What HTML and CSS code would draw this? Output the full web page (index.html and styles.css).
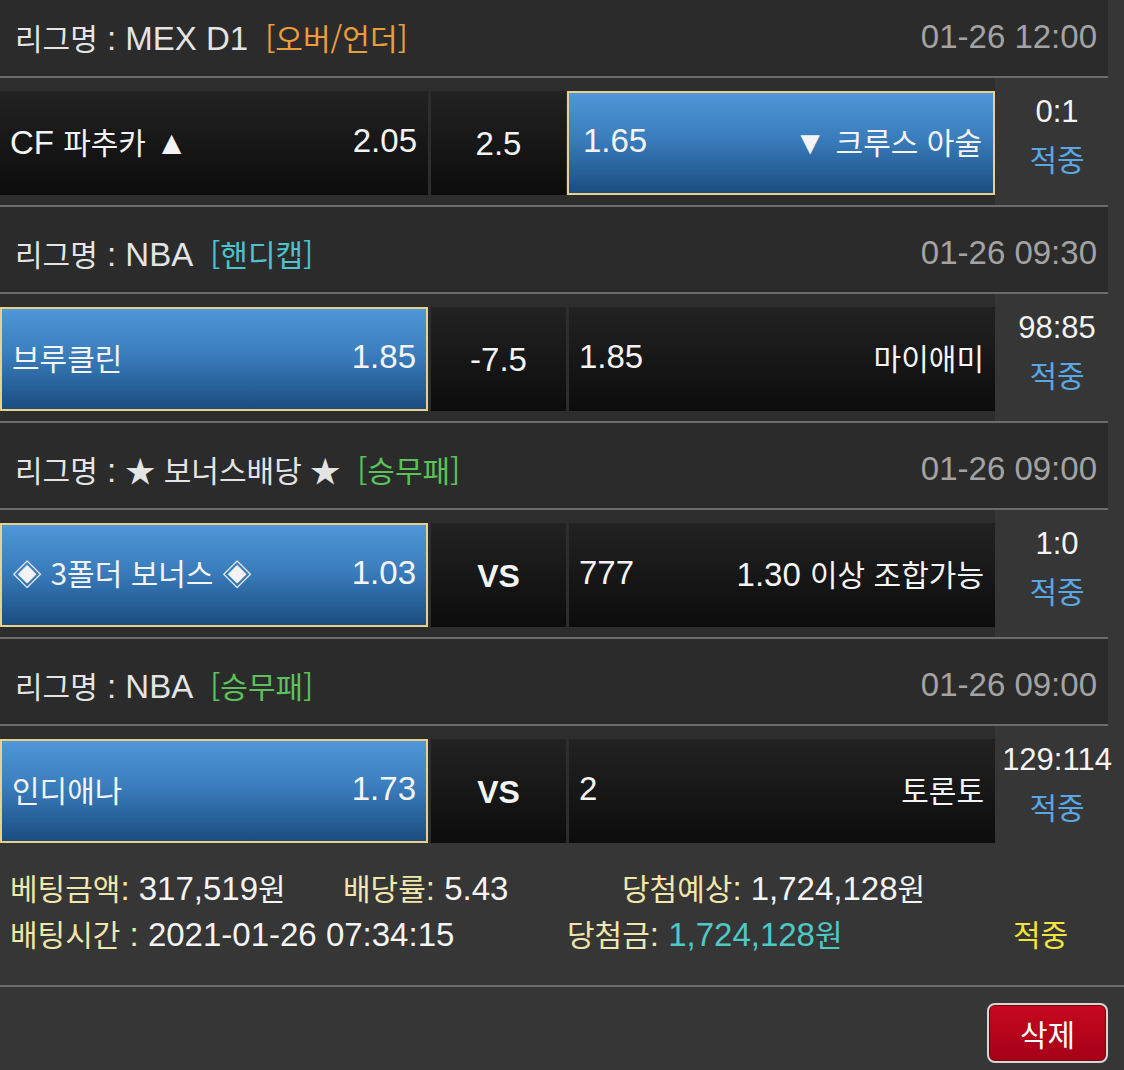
FILE: index.html
```html
<!DOCTYPE html>
<html lang="ko">
<head>
<meta charset="utf-8">
<title>배팅내역</title>
<link rel="stylesheet" href="styles.css">
</head>
<body>
<div class="list">
  <section class="game">
    <div class="league"><span class="lg-name"><span class="k">리그명</span> : MEX D1</span><span class="tag tag-ou k">[오버/언더]</span><span class="date">01-26 12:00</span></div>
    <div class="match">
      <div class="cells">
        <div class="cell side"><span>CF <span class="k">파추카</span> ▲</span><span>2.05</span></div>
        <div class="cell mid">2.5</div>
        <div class="cell side picked"><span>1.65</span><span>▼ <span class="k">크루스 아술</span></span></div>
      </div>
      <div class="score"><div class="sc">0:1</div><div class="res k">적중</div></div>
    </div>
  </section>
  <section class="game">
    <div class="league"><span class="lg-name"><span class="k">리그명</span> : NBA</span><span class="tag tag-hd k">[핸디캡]</span><span class="date">01-26 09:30</span></div>
    <div class="match">
      <div class="cells">
        <div class="cell side picked"><span class="k">브루클린</span><span>1.85</span></div>
        <div class="cell mid">-7.5</div>
        <div class="cell side"><span>1.85</span><span class="k">마이애미</span></div>
      </div>
      <div class="score"><div class="sc">98:85</div><div class="res k">적중</div></div>
    </div>
  </section>
  <section class="game">
    <div class="league"><span class="lg-name"><span class="k">리그명</span> : <span class="k">★ 보너스배당 ★</span></span><span class="tag tag-wdl k">[승무패]</span><span class="date">01-26 09:00</span></div>
    <div class="match">
      <div class="cells">
        <div class="cell side picked"><span class="k">◈ 3폴더 보너스 ◈</span><span>1.03</span></div>
        <div class="cell mid vs">VS</div>
        <div class="cell side"><span>777</span><span>1.30 <span class="k">이상 조합가능</span></span></div>
      </div>
      <div class="score"><div class="sc">1:0</div><div class="res k">적중</div></div>
    </div>
  </section>
  <section class="game last">
    <div class="league"><span class="lg-name"><span class="k">리그명</span> : NBA</span><span class="tag tag-wdl k">[승무패]</span><span class="date">01-26 09:00</span></div>
    <div class="match">
      <div class="cells">
        <div class="cell side picked"><span class="k">인디애나</span><span>1.73</span></div>
        <div class="cell mid vs">VS</div>
        <div class="cell side"><span>2</span><span class="k">토론토</span></div>
      </div>
      <div class="score"><div class="sc">129:114</div><div class="res k">적중</div></div>
    </div>
  </section>
</div>

<div class="summary">
  <div class="sum-row">
    <div class="it it-a"><span class="lbl"><span class="k">베팅금액</span>:</span> 317,519<span class="k">원</span></div>
    <div class="it it-b"><span class="lbl"><span class="k">배당률</span>:</span> 5.43</div>
    <div class="it"><span class="lbl"><span class="k">당첨예상</span>:</span> 1,724,128<span class="k">원</span></div>
  </div>
  <div class="sum-row">
    <div class="it it-c"><span class="lbl"><span class="k">배팅시간</span> :</span> 2021-01-26 07:34:15</div>
    <div class="it it-d"><span class="lbl"><span class="k">당첨금</span>:</span> <span class="win">1,724,128<span class="k">원</span></span></div>
    <div class="it hit k">적중</div>
  </div>
</div>

<div class="actions">
  <button class="btn-del k" type="button">삭제</button>
</div>
</body>
</html>
```

FILE: styles.css
```css
html, body {
  margin: 0;
  padding: 0;
}
body {
  background: #363636;
  color: #f2f2f2;
  font-family: "Liberation Sans", "Noto Sans CJK KR", sans-serif;
  font-size: 33px;
  width: 1124px;
  height: 1070px;
  overflow: hidden;
}
.k {
  font-family: "Noto Sans CJK KR", "Liberation Sans", sans-serif;
  font-size: 30px;
}

.list {
  width: 1108px;
  margin-top: -9px;
}

.league {
  height: 87px;
  box-sizing: border-box;
  padding: 7px 11px 0 15px;
  display: flex;
  align-items: center;
  background: #2b2b2b;
  border-bottom: 2px solid #6b6b6b;
  color: #e4e4e4;
}
.tag {
  margin-left: 17px;
}
.tag-ou { color: #e89e3c; }
.tag-hd { color: #4cc3cf; }
.tag-wdl { color: #5cc15a; }
.date {
  margin-left: auto;
  color: #a3a3a3;
}

.match {
  display: flex;
  height: 127px;
  border-bottom: 2px solid #6b6b6b;
}
.game.last .match {
  height: 117px;
  border-bottom: 0;
}
.cells {
  width: 995px;
  flex: none;
  box-sizing: border-box;
  padding: 13px 0 10px;
  display: flex;
  gap: 3px;
  background: #2d2d2d;
}
.game.last .cells {
  padding-bottom: 0;
}
.cell {
  box-sizing: border-box;
  height: 104px;
  display: flex;
  align-items: center;
  background: linear-gradient(#222222, #0c0c0c);
  color: #f4f4f4;
  white-space: nowrap;
}
.cell.side {
  justify-content: space-between;
  padding: 0 11px 4px 10px;
}
.cells .cell:first-child { width: 428px; }
.cells .cell.mid {
  width: 135px;
  justify-content: center;
  padding-top: 2px;
}
.cells .cell:last-child { width: 426px; }
.cell.vs {
  font-weight: bold;
  font-size: 32px;
}
.cell.picked {
  border: 2px solid #ead08a;
  background: linear-gradient(#4e97d8, #3a7dbd 45%, #1b4d80);
  padding: 0 10px 4px 10px;
}
.cells .cell.picked:last-child {
  width: 428px;
  margin-left: -2px;
  padding: 0 11px 4px 14px;
}

.score {
  flex: 1;
  min-width: 0;
  background: #363636;
  box-sizing: border-box;
  padding: 11px 0 0 11px;
  text-align: center;
  line-height: 46px;
  white-space: nowrap;
  display: flex;
  flex-direction: column;
  align-items: center;
}
.score .sc {
  color: #f4f4f4;
  font-size: 31px;
}
.score .res { color: #5aa6e2; }

.summary {
  box-sizing: border-box;
  height: 144px;
  padding: 22px 0 0 10px;
  border-bottom: 2px solid #6b6b6b;
  color: #f4f4f4;
}
.sum-row {
  display: flex;
  align-items: baseline;
  line-height: 45px;
  white-space: nowrap;
}
.it-a { width: 333px; }
.it-b { width: 279px; }
.it-c { width: 557px; }
.it-d { width: 446px; }
.lbl { color: #f1e6ab; }
.win { color: #4ec9c6; }
.hit { color: #f2e33f; }

.actions {
  display: flex;
  justify-content: flex-end;
  padding: 16px 16px 0 0;
}
.btn-del {
  width: 121px;
  height: 60px;
  box-sizing: border-box;
  border: 2px solid #d6d6d6;
  border-radius: 8px;
  background: linear-gradient(#c6091f, #a50017);
  color: #ffffff;
  padding: 0;
  box-shadow: inset 0 0 0 1px #7a0010;
}
```
